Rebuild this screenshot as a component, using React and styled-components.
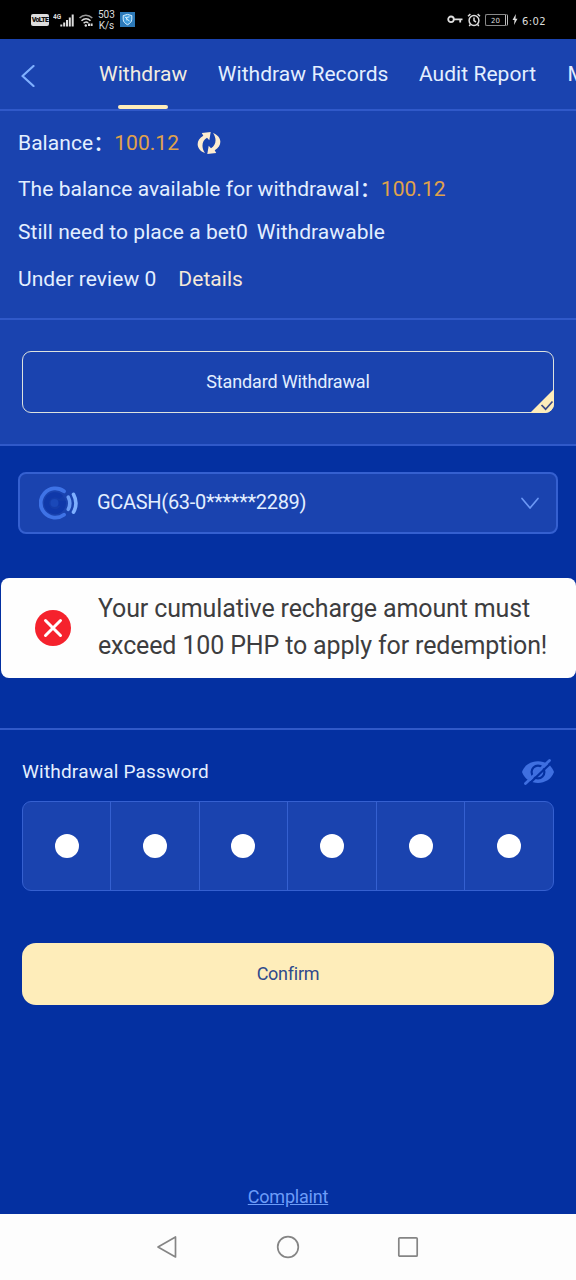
import React from 'react'
import styled, { createGlobalStyle } from 'styled-components';

const tabs = ['Withdraw', 'Withdraw Records', 'Audit Report', 'M'];
const digits = [1, 2, 3, 4, 5, 6];

function StatusBar() {
    return (
        <StatusStyle>
            <StatusGroup>
                <Volte>VoLTE</Volte>
                <svg width="22" height="18" viewBox="0 0 22 18">
                    <text x="0" y="7.500" fontSize="6.500" fontWeight="700" fill="#ddd">4G</text>
                    <g fill="#ddd">
                        <rect x="7.300" y="13.500" width="2" height="2" />
                        <rect x="10.200" y="11.500" width="2" height="4" />
                        <rect x="13" y="9" width="2" height="6.500" />
                        <rect x="15.800" y="6.500" width="2" height="9" />
                        <rect x="18.700" y="3.500" width="2" height="12" />
                    </g>
                </svg>
                <svg width="14" height="14" viewBox="0 0 14 14" fill="none" stroke="#ddd" strokeWidth="1.500">
                    <path d="M.5 5C4 1.200 9.500 1.200 13.300 5" stroke="#999" />
                    <path d="M2.500 7.800C5.300 5 8.800 5 11.500 7.800" />
                    <path d="M4.600 10.200C6 8.800 8 8.800 9.200 10" />
                    <circle cx="6.800" cy="12.500" r="1.200" fill="#ddd" stroke="none" />
                    <path d="M9 11.800h4.600" strokeWidth="2.400" strokeDasharray="2 .6" />
                </svg>
                <Speed>
                    <span>503</span>
                    <span>K/s</span>
                </Speed>
                <Shield width="15" height="15" viewBox="0 0 15 15">
                    <rect width="15" height="15" fill="#2c79b8" />
                    <path d="M3.200 3.600 7.500 2.400l4.300 1.200v3.600c0 2.600-1.800 4.300-4.300 5.500C5 11.500 3.200 9.800 3.200 7.200z" fill="#3f9bdc" stroke="#d8f0ff" strokeWidth="1" />
                    <path d="M5 4.800 7.500 7.500 9.500 9M9.500 4.800 6.500 5.500 7 8.500" fill="none" stroke="#d8f0ff" strokeWidth="1" />
                </Shield>
            </StatusGroup>
            <StatusGroup>
                <svg width="16" height="9" viewBox="0 0 16 9" fill="none" stroke="#ddd" strokeWidth="1.800">
                    <circle cx="4" cy="4.300" r="2.800" />
                    <path d="M7 4.300h8.500M13.200 4.300v3.200" />
                </svg>
                <svg width="14" height="14" viewBox="0 0 14 14" fill="none" stroke="#ddd" strokeWidth="1.500">
                    <circle cx="7" cy="7.500" r="4.900" />
                    <path d="M7 4.600v3.100l2 1.300M1 3.200 3.400 1.100M13 3.200 10.600 1.100M3.400 11.500 2.200 13M10.600 11.500l1.200 1.500" />
                </svg>
                <Battery>20</Battery>
                <svg width="6" height="11" viewBox="0 0 6 11">
                    <path d="M3.800 0 .5 6h2L2 11l3.500-6.300h-2z" fill="#ddd" />
                </svg>
                <Clock>6:02</Clock>
            </StatusGroup>
        </StatusStyle>
    )
}

function GcashLogo() {
    return (
        <svg width="40" height="34" viewBox="0 0 40 34" fill="none" strokeLinecap="round">
            <circle cx="16" cy="17" r="10.500" fill="#143da9" />
            <path d="M25 5.300A14.600 14.600 0 1 0 25 28.700" stroke="#3f73e6" strokeWidth="3.800" />
            <path d="M22 11.200A8.500 8.500 0 1 0 24.500 17.300H17" stroke="#0f38a9" strokeWidth="5" strokeLinecap="butt" />
            <circle cx="15.500" cy="17" r="4" fill="#1a48b8" />
            <path d="M29.300 11.200C31.200 15 31.200 19.500 29.300 23.300" stroke="#6a9cf5" strokeWidth="3.600" />
            <path d="M34.500 8.300C37.600 14 37.600 20.500 34.500 26.200" stroke="#7fb0ff" strokeWidth="3.600" />
        </svg>
    )
}

function App() {
    return (
        <>
            <GlobalStyle />
            <Page>
                <StatusBar />
                <Tabs>
                    <Back>
                        <svg width="14" height="22" viewBox="0 0 14 22" fill="none" stroke="#7fb0ff" strokeWidth="2.200" strokeLinecap="round" strokeLinejoin="round">
                            <path d="M12.500 1 1.500 11l11 10" />
                        </svg>
                    </Back>
                    {tabs.map((tab, i) => (
                        <Tab key={tab} $active={i === 0}>{tab}</Tab>
                    ))}
                </Tabs>
                <Info>
                    <InfoRow>
                        <span>Balance</span><Colon>：</Colon><Amount>100.12</Amount>
                        <Refresh width="24" height="24" viewBox="0 0 24 24">
                            <path d="M8 22C-1.500 18.500-1.500 9 6.300 4.700L4.800 2 13.700 1 12.300 9.200 10 6.700C4.800 9.500 4 16.500 8 22z" />
                            <path d="M16 2C25.500 5.500 25.500 15 17.700 19.300L19.200 22 10.300 23 11.700 14.800 14 17.300C19.200 14.500 20 7.500 16 2z" />
                        </Refresh>
                    </InfoRow>
                    <InfoRow>
                        <span>The balance available for withdrawal</span><Colon>：</Colon><Amount>100.12</Amount>
                    </InfoRow>
                    <InfoRow>
                        Still need to place a bet0<Status>Withdrawable</Status>
                    </InfoRow>
                    <InfoRow>
                        Under review 0<Details>Details</Details>
                    </InfoRow>
                </Info>
                <Method>
                    <MethodOption>
                        Standard Withdrawal
                        <Corner width="24" height="24" viewBox="0 0 24 24">
                            <path d="M0 24 24 0V24z" fill="#feedba" />
                            <path d="M11.500 16 15.600 20.200 22.500 12.500" fill="none" stroke="#3b4a86" strokeWidth="1.700" />
                        </Corner>
                    </MethodOption>
                </Method>
                <Account>
                    <GcashLogo />
                    <AccountName>GCASH(63-0******2289)</AccountName>
                    <svg width="20" height="13" viewBox="0 0 20 13" fill="none" stroke="#6c98f5" strokeWidth="1.700" strokeLinecap="round" strokeLinejoin="round">
                        <path d="M2 1.500 10 11l8-9.500" />
                    </svg>
                </Account>
                <Toast>
                    <svg width="36" height="36" viewBox="0 0 36 36">
                        <circle cx="18" cy="18" r="18" fill="#f5222d" />
                        <path d="M10.500 10.500l15 15M25.500 10.500l-15 15" stroke="#fff" strokeWidth="3" strokeLinecap="round" />
                    </svg>
                    <p>Your cumulative recharge amount must<br />exceed 100 PHP to apply for redemption!</p>
                </Toast>
                <Password>
                    <PasswordHead>
                        <h3>Withdrawal Password</h3>
                        <svg width="32" height="26" viewBox="0 0 32 26">
                            <path d="M0 13C5-1.500 27-1.500 32 13 27 27.500 5 27.500 0 13z" fill="#3f6fe0" />
                            <circle cx="16" cy="13" r="6.400" fill="none" stroke="#0430a1" strokeWidth="2.200" />
                            <path d="M5 26.800 30 3" stroke="#0430a1" strokeWidth="2.200" />
                            <path d="M3.500 24.500 27.500 1.500" stroke="#3f6fe0" strokeWidth="2.800" strokeLinecap="round" />
                        </svg>
                    </PasswordHead>
                    <Cells>
                        {digits.map((digit) => (
                            <Cell key={digit}><Dot /></Cell>
                        ))}
                    </Cells>
                    <Confirm>Confirm</Confirm>
                </Password>
                <Complaint href="#">Complaint</Complaint>
                <NavBar>
                    <svg width="22" height="24" viewBox="0 0 22 24"><path d="M2 12 19.500 2v20z" /></svg>
                    <svg width="24" height="24" viewBox="0 0 24 24"><circle cx="12" cy="12" r="10.300" /></svg>
                    <svg width="22" height="22" viewBox="0 0 22 22"><rect x="1.800" y="1.800" width="18.400" height="18.400" rx="1" /></svg>
                </NavBar>
            </Page>
        </>
    )
}

const GlobalStyle = createGlobalStyle`
    *{
        box-sizing: border-box;
        margin: 0;
        padding: 0;
    }
    body{
        font-family: Roboto, "Noto Sans CJK SC", sans-serif;
        background: #0430a1;
    }
    svg{
        flex-shrink: 0;
    }
`;

const Page = styled.div`
    width: 576px;
    height: 1280px;
    display: flex;
    flex-direction: column;
    overflow: hidden;
    background: #0430a1;
    color: #e3efff;
`;

const StatusStyle = styled.header`
    height: 39px;
    display: flex;
    justify-content: space-between;
    align-items: center;
    padding: 0 30px 0 31px;
    background: #000;
    color: #ddd;
`;
const StatusGroup = styled.div`
    display: flex;
    align-items: center;
    gap: 4px;
`;
const Volte = styled.span`
    width: 18px;
    height: 12px;
    border-radius: 2px;
    background: #ddd;
    color: #111;
    font-size: 7px;
    font-weight: 900;
    line-height: 12px;
    letter-spacing: -0.7px;
    text-align: center;
`;
const Speed = styled.div`
    display: flex;
    flex-direction: column;
    align-items: center;
    margin-left: 1px;
    font-size: 10px;
    line-height: 11px;
`;
const Shield = styled.svg`
    margin-left: 1px;
`;
const Battery = styled.span`
    width: 23px;
    height: 12px;
    border: 1px solid #888;
    border-right: 3px double #bbb;
    border-radius: 2px;
    font-family: "DejaVu Sans", sans-serif;
    font-size: 7px;
    line-height: 12px;
    text-align: center;
`;
const Clock = styled.span`
    padding-top: 3px;
    font-family: "DejaVu Sans", sans-serif;
    font-size: 10px;
    letter-spacing: 0.4px;
`;

const Tabs = styled.nav`
    height: 72px;
    flex-shrink: 0;
    display: flex;
    gap: 30.5px;
    border-bottom: 2px solid #3059c9;
    background: #1a43af;
`;
const Back = styled.div`
    width: 68.5px;
    flex-shrink: 0;
    display: flex;
    align-items: center;
    padding: 3px 0 0 21px;
`;
const Tab = styled.div`
    flex-shrink: 0;
    display: flex;
    flex-direction: column;
    align-items: center;
    font-size: 21px;
    line-height: 70px;
    letter-spacing: 0.05px;
    white-space: nowrap;
    color: ${({ $active }) => ($active ? '#f2ece0' : '#e3efff')};
    &::after{
        content: '';
        width: 50px;
        height: 4px;
        flex-shrink: 0;
        margin-top: -4px;
        border-radius: 2px;
        background: ${({ $active }) => ($active ? '#feedba' : 'transparent')};
    }
    &:last-child{
        width: 18px;
        margin-left: 1px;
        align-items: flex-start;
    }
`;

const Info = styled.section`
    height: 209px;
    flex-shrink: 0;
    display: grid;
    grid-template-rows: 46px 46px 40px 54px;
    padding: 9px 18px 0;
    border-bottom: 2px solid #3059c9;
    background: #1a43af;
`;
const InfoRow = styled.div`
    display: flex;
    align-items: center;
    font-size: 21px;
    letter-spacing: 0.05px;
    white-space: nowrap;
`;
const Colon = styled.span`
    line-height: 24px;
    font-weight: 500;
`;
const Amount = styled.span`
    color: #e0a24a;
`;
const Refresh = styled.svg`
    margin-left: 18px;
    fill: #feedcf;
`;
const Status = styled.span`
    margin-left: 9px;
`;
const Details = styled.span`
    margin-left: 22px;
    color: #f5e8d8;
`;

const Method = styled.section`
    height: 126px;
    flex-shrink: 0;
    padding: 31px 22px;
    border-bottom: 2px solid #3059c9;
    background: #1a43af;
`;
const MethodOption = styled.div`
    position: relative;
    height: 62px;
    display: flex;
    align-items: center;
    justify-content: center;
    padding-bottom: 2px;
    border: 1px solid #dde3df;
    border-radius: 9px;
    font-size: 18px;
    letter-spacing: -0.16px;
`;
const Corner = styled.svg`
    position: absolute;
    right: -1px;
    bottom: -1px;
    border-bottom-right-radius: 9px;
`;

const Account = styled.div`
    height: 62px;
    flex-shrink: 0;
    display: flex;
    align-items: center;
    margin: 26px 18px 0;
    padding: 0 16px 0 19px;
    border: 2px solid #3560d0;
    border-radius: 8px;
    background: #1a43af;
`;
const AccountName = styled.span`
    flex: 1;
    margin-left: 18px;
    padding-bottom: 2px;
    font-size: 20px;
    letter-spacing: -0.3px;
`;

const Toast = styled.div`
    height: 100px;
    flex-shrink: 0;
    display: flex;
    align-items: center;
    margin: 44px 0 0 1px;
    padding-left: 34px;
    border-radius: 8px;
    background: #fefefe;
    p{
        margin-left: 27px;
        padding-bottom: 2px;
        font-size: 25px;
        line-height: 37px;
        letter-spacing: -0.14px;
        white-space: nowrap;
        color: #3d3d3f;
    }
`;

const Password = styled.section`
    margin-top: 50px;
    padding: 27px 22px 0;
    border-top: 2px solid #3059c9;
`;
const PasswordHead = styled.div`
    height: 30px;
    display: flex;
    align-items: center;
    justify-content: space-between;
    h3{
        padding-bottom: 2px;
        font-size: 19px;
        font-weight: 400;
        letter-spacing: 0.2px;
    }
`;
const Cells = styled.div`
    height: 90px;
    display: grid;
    grid-template-columns: 87px repeat(5, 1fr);
    margin-top: 14px;
    border: 1px solid #3560d0;
    border-radius: 9px;
    background: #1a43af;
`;
const Cell = styled.div`
    display: flex;
    align-items: center;
    justify-content: center;
    & + &{
        border-left: 1px solid #3560d0;
    }
`;
const Dot = styled.span`
    width: 24px;
    height: 24px;
    border-radius: 50%;
    background: #fff;
`;
const Confirm = styled.button`
    display: block;
    width: 100%;
    height: 62px;
    margin-top: 52px;
    padding-bottom: 2px;
    border: none;
    border-radius: 14px;
    background: #feedba;
    color: #2f4a8c;
    font-family: inherit;
    font-size: 18px;
    letter-spacing: -0.25px;
`;
const Complaint = styled.a`
    align-self: center;
    margin-top: auto;
    margin-bottom: 7px;
    font-size: 18px;
    letter-spacing: -0.2px;
    color: #6c9cf8;
`;

const NavBar = styled.footer`
    height: 66px;
    flex-shrink: 0;
    display: flex;
    align-items: center;
    justify-content: space-between;
    padding: 0 157px 0 156px;
    background: #fdfdfd;
    svg{
        fill: none;
        stroke: #858585;
        stroke-width: 1.7;
        stroke-linejoin: round;
    }
`;

export default App
